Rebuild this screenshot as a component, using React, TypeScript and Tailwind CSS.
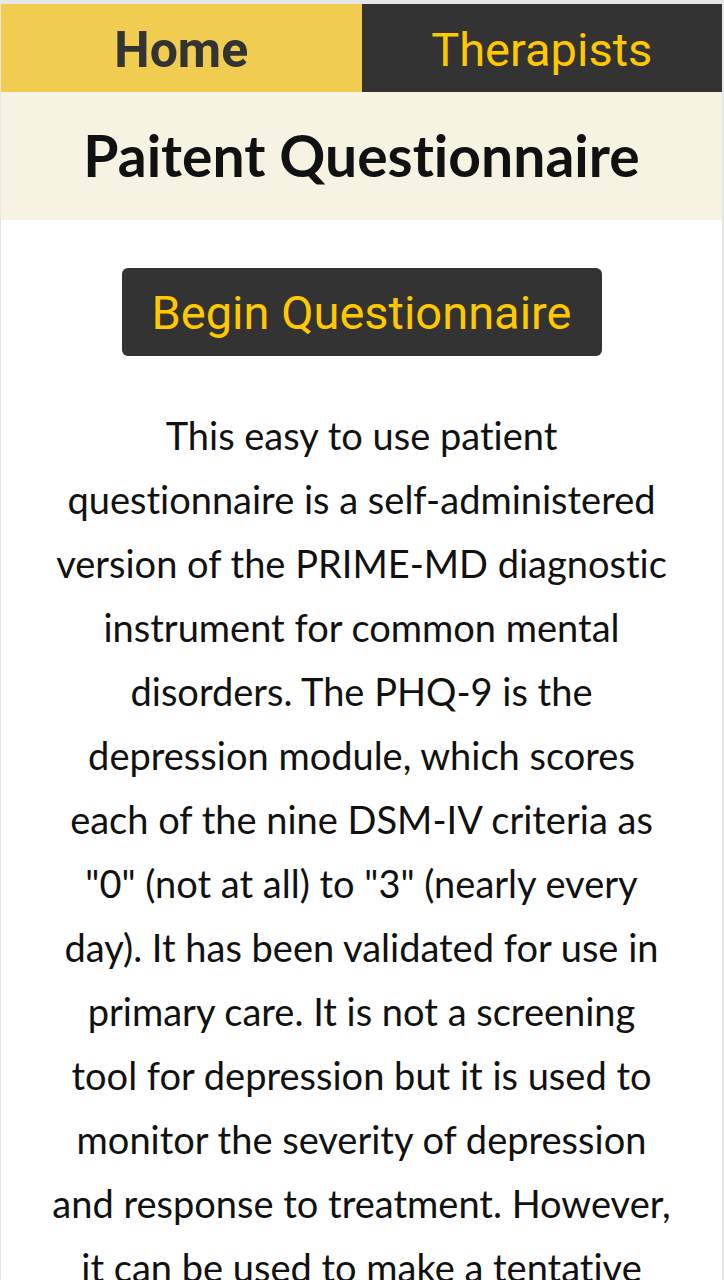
export default function App() {
  return (
    <div className="min-h-[1280px] bg-white border-t-4 border-l border-r-2 border-[#e6e6e6]">
      <nav className="flex h-[88px]">
        <a className="flex-1 flex items-center justify-center pt-[4px] bg-[#f0cc50] text-[#333333] text-[50px] font-bold font-['Roboto',sans-serif]">
          Home
        </a>
        <a className="flex-1 flex items-center justify-center pt-[4px] bg-[#333333] text-[#ffc800] text-[47px] font-['Roboto',sans-serif]">
          Therapists
        </a>
      </nav>
      <header className="h-[128px] bg-[#f6f3e3] flex items-center justify-center">
        <h1 className="text-[57px] font-bold text-[#111111] font-['Lato',sans-serif] [font-variant-ligatures:none]">Paitent Questionnaire</h1>
      </header>
      <main className="flex flex-col items-center pt-[48px]">
        <button className="w-[480px] h-[88px] pt-[3px] rounded-[6px] bg-[#333333] text-[#ffc800] text-[47px] font-['Roboto',sans-serif]">
          Begin Questionnaire
        </button>
        <p className="w-[620px] mt-[47px] text-center text-[38px] leading-[64px] text-[#111111] font-['Lato',sans-serif] [font-variant-ligatures:none]">
          This easy to use patient questionnaire is a self-administered version of the PRIME-MD diagnostic instrument for common mental disorders. The PHQ-9 is the depression module, which scores each of the nine DSM-IV criteria as "0" (not at all) to "3" (nearly every day). It has been validated for use in primary care. It is not a screening tool for depression but it is used to monitor the severity of depression and response to treatment. However, it can be used to make a tentative diagnosis of depression in at-risk populations.
        </p>
      </main>
    </div>
  );
}
